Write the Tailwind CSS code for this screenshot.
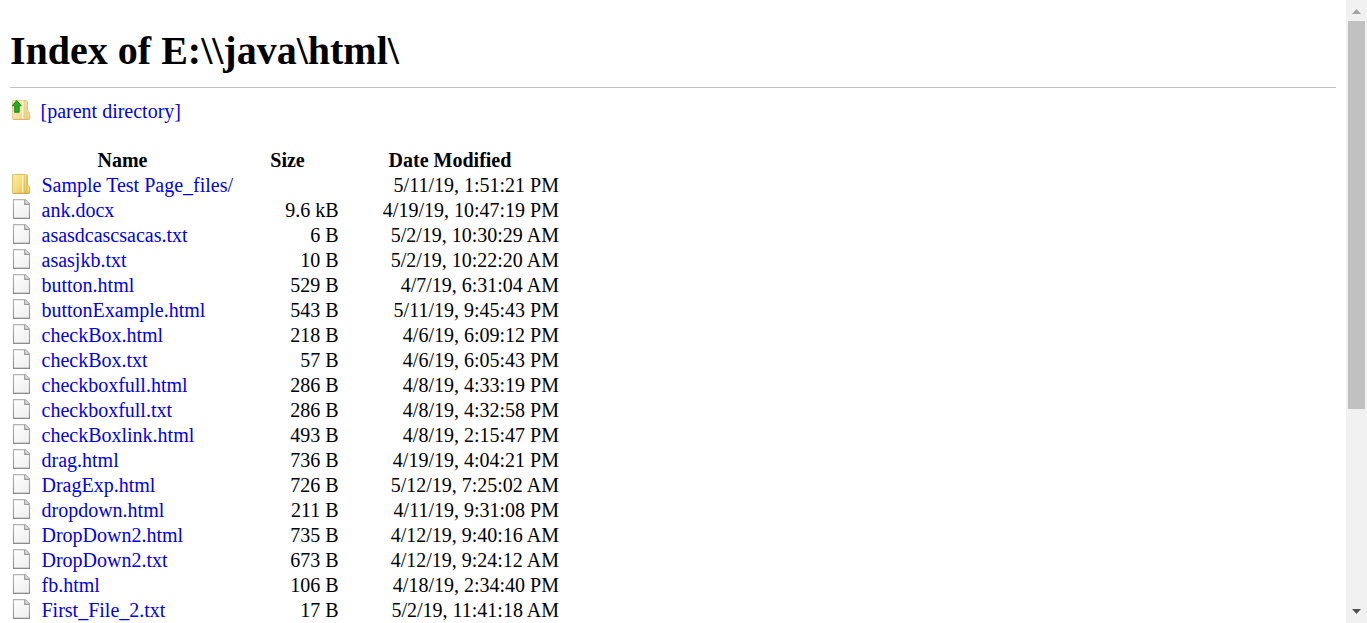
<!DOCTYPE html>
<html lang="en">
<head>
<meta charset="utf-8">
<title>Index of E:\\java\html\</title>
<script src="https://cdn.jsdelivr.net/npm/@tailwindcss/browser@4"></script>
</head>
<body class="flex h-[623px] overflow-hidden bg-white font-['Liberation_Serif','Times_New_Roman',serif] text-[20px] leading-[23px] text-black">
<svg class="h-0 w-0 shrink-0">
  <defs>
    <linearGradient id="gold" x1="0" y1="0" x2="1" y2="1"><stop offset="0" stop-color="#f9eba0"/><stop offset=".5" stop-color="#f3dc80"/><stop offset="1" stop-color="#e2bd50"/></linearGradient>
    <linearGradient id="pale" x1="0" y1="0" x2="1" y2="1"><stop offset="0" stop-color="#fbf2c4"/><stop offset="1" stop-color="#ecd48a"/></linearGradient>
    <linearGradient id="paper" x1="0" y1="0" x2="1" y2="1"><stop offset="0" stop-color="#fff"/><stop offset="1" stop-color="#eeeeee"/></linearGradient>
    <linearGradient id="edge" x1="0" y1="0" x2="0" y2="1"><stop offset="0" stop-color="#b4b4b4"/><stop offset="1" stop-color="#8f8f8f"/></linearGradient>
    <symbol id="folder" viewBox="0 0 20 20">
      <path d="M13 1.500h2.500V11l2.200 1.800V19H12z" fill="#f1d778" stroke="#d5b452" stroke-width=".9"/>
      <path d="M.5 1.200Q.5.500 1.300.500H14q1 0 1 1V18q0 1.500-1.500 1.500H1.300Q.5 19.500.5 18.700z" fill="url(#gold)" stroke="#dabd60" stroke-width=".9"/>
      <path d="M10.800 1v17.500" stroke="#fff6c0" stroke-width="1.200"/>
      <path d="M12.300 1v17.500" stroke="#dfc060" stroke-width=".8"/>
      <path d="M1 19.400h16.500" stroke="#cba345" stroke-width=".9"/>
    </symbol>
    <symbol id="file" viewBox="0 0 20 20">
      <path d="M1.500.600h11.800l4.200 4.200v14.600h-16z" fill="url(#paper)" stroke="url(#edge)" stroke-width="1.100"/>
      <path d="M12.700.900v4.500h4.600" fill="#dedede" stroke="#999" stroke-width="1.100"/>
      <path d="M1.200 19.400h16.600" stroke="#8c8c8c" stroke-width="1"/>
    </symbol>
    <symbol id="up" viewBox="0 0 20 20">
      <path d="M13 1.500h2.500V11l2.200 1.800V19H12z" fill="#f0dc96" stroke="#dcc077" stroke-width=".9"/>
      <path d="M.5 1.200Q.5.500 1.300.500H14q1 0 1 1V18q0 1.500-1.500 1.500H1.300Q.5 19.500.5 18.700z" fill="url(#pale)" stroke="#e0ca84" stroke-width=".9"/>
      <path d="M10.800 1v17.500" stroke="#fffadb" stroke-width="1.200"/>
      <path d="M12.300 1v17.500" stroke="#e2c97f" stroke-width=".8"/>
      <path d="M1 19.400h16.500" stroke="#d3b261" stroke-width=".9"/>
      <path d="M4.700.4L9.300 5.800H7.200v6.500H2.600V5.800H0z" fill="#2ca51f" stroke="#188a12" stroke-width=".9"/>
    </symbol>
  </defs>
</svg>
<main class="min-w-0 flex-1 px-[10px] pt-[28px]">
  <h1 class="h-[60px] border-b border-[#c0c0c0] text-[40px] leading-[46px] font-bold">Index of E:\\java\html\</h1>
  <a class="mt-[12px] flex h-[25px] text-[#0000ee]"><svg class="mr-[8.5px] ml-[2px] size-5"><use href="#up"/></svg><span>[parent directory]</span></a>
  <table class="mt-[24px] w-[549px] table-fixed border-collapse">
    <thead>
      <tr class="h-[25px] align-top"><th class="w-[225px] p-0 text-center">Name</th><th class="w-[106px] p-0 pr-[1px] text-center">Size</th><th class="w-[218px] p-0 text-center">Date Modified</th></tr>
    </thead>
    <tbody id="rows"></tbody>
  </table>
</main>
<aside class="flex h-full w-[21px] shrink-0 flex-col items-center bg-[#f1f1f1]">
  <svg class="h-[21px] w-[21px] shrink-0" viewBox="0 0 21 21"><path d="M6 14h9l-4.500-5z" fill="#a3a3a3"/></svg>
  <div class="h-[388px] w-[17px] bg-[#c1c1c1]"></div>
  <svg class="mt-auto h-[21px] w-[21px] shrink-0" viewBox="0 0 21 21"><path d="M6 7h9l-4.500 5z" fill="#505050"/></svg>
</aside>
<script>
const entries = [
  ["Sample Test Page_files/", "", "5/11/19, 1:51:21 PM"],
  ["ank.docx", "9.6 kB", "4/19/19, 10:47:19 PM"],
  ["asasdcascsacas.txt", "6 B", "5/2/19, 10:30:29 AM"],
  ["asasjkb.txt", "10 B", "5/2/19, 10:22:20 AM"],
  ["button.html", "529 B", "4/7/19, 6:31:04 AM"],
  ["buttonExample.html", "543 B", "5/11/19, 9:45:43 PM"],
  ["checkBox.html", "218 B", "4/6/19, 6:09:12 PM"],
  ["checkBox.txt", "57 B", "4/6/19, 6:05:43 PM"],
  ["checkboxfull.html", "286 B", "4/8/19, 4:33:19 PM"],
  ["checkboxfull.txt", "286 B", "4/8/19, 4:32:58 PM"],
  ["checkBoxlink.html", "493 B", "4/8/19, 2:15:47 PM"],
  ["drag.html", "736 B", "4/19/19, 4:04:21 PM"],
  ["DragExp.html", "726 B", "5/12/19, 7:25:02 AM"],
  ["dropdown.html", "211 B", "4/11/19, 9:31:08 PM"],
  ["DropDown2.html", "735 B", "4/12/19, 9:40:16 AM"],
  ["DropDown2.txt", "673 B", "4/12/19, 9:24:12 AM"],
  ["fb.html", "106 B", "4/18/19, 2:34:40 PM"],
  ["First_File_2.txt", "17 B", "5/2/19, 11:41:18 AM"]
];
document.getElementById("rows").innerHTML = entries.map(([name, size, date]) => `
  <tr class="h-[25px] align-top whitespace-nowrap">
    <td class="p-0"><a class="flex h-[25px] text-[#0000ee]"><svg class="mr-[9.5px] ml-[2px] size-5 shrink-0"><use href="#${name.endsWith("/") ? "folder" : "file"}"/></svg><span>${name}</span></a></td>
    <td class="p-0 pr-[2.5px] text-right">${size}</td>
    <td class="p-0 text-right">${date}</td>
  </tr>`).join("");
</script>
</body>
</html>
